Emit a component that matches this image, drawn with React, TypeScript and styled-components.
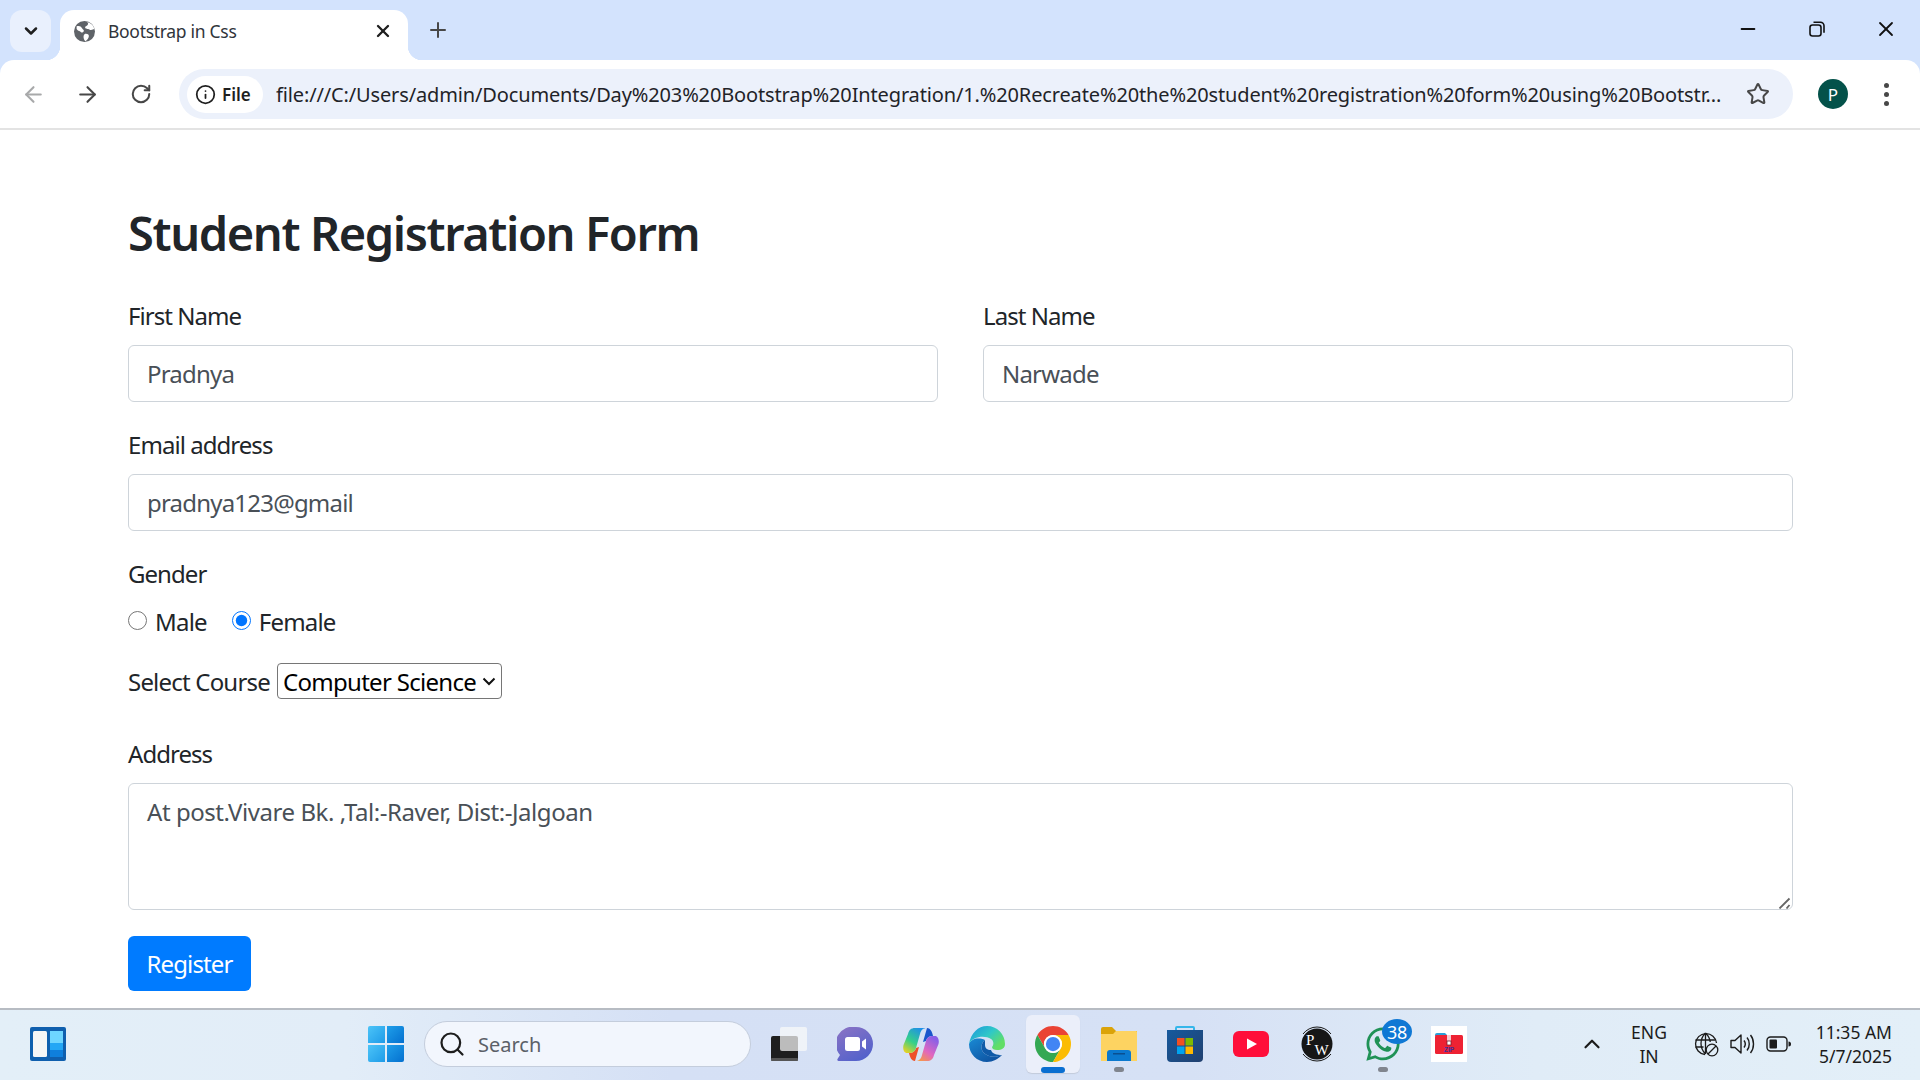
import React from "react";
import styled, { createGlobalStyle } from "styled-components";
import { ArrowLeft, ArrowRight, RotateCw, Star, Plus, X, ChevronDown, ChevronUp, Minus, Info, Search } from "lucide-react";
import { FaWhatsapp } from "react-icons/fa";

const URL_TEXT =
  "file:///C:/Users/admin/Documents/Day%203%20Bootstrap%20Integration/1.%20Recreate%20the%20student%20registration%20form%20using%20Bootstr...";

const FONT = `"Noto Sans", "Open Sans", "Liberation Sans", sans-serif`;

const SELECT_ARROW =
  "url(\"data:image/svg+xml,%3Csvg xmlns='http://www.w3.org/2000/svg' width='14' height='9' viewBox='0 0 14 9'%3E%3Cpath d='M1.500 1.500L7 7l5.500-5.500' fill='none' stroke='%23111' stroke-width='2'/%3E%3C/svg%3E\")";

const RESIZE_GRIP =
  "url(\"data:image/svg+xml,%3Csvg xmlns='http://www.w3.org/2000/svg' width='15' height='15' viewBox='0 0 15 15'%3E%3Cpath d='M2.500 14.500l10-10M9.500 14.500l3-3.500' fill='none' stroke='%23666' stroke-width='1.800'/%3E%3C/svg%3E\")";

const GlobalStyle = createGlobalStyle`
  html, body {
    margin: 0;
    padding: 0;
    height: 100%;
    overflow: hidden;
    background: #fff;
  }
  * { box-sizing: border-box; }
`;

const Shell = styled.div`
  display: flex;
  flex-direction: column;
  width: 1920px;
  height: 1080px;
  font-family: ${FONT};
  color: #212529;
`;

const TabStrip = styled.div`
  display: flex;
  align-items: flex-end;
  height: 60px;
  flex: none;
  padding-left: 10px;
  background: #d3e3fd;
`;

const TabListButton = styled.div`
  display: flex;
  align-items: center;
  justify-content: center;
  width: 41px;
  height: 42px;
  margin-bottom: 8px;
  border-radius: 12px;
  background: #e9f0fd;
  color: #1f1f1f;
`;

const Tab = styled.div`
  position: relative;
  display: flex;
  align-items: center;
  width: 348px;
  height: 50px;
  margin-left: 9px;
  padding: 0 15px 8px 14px;
  background: #fff;
  border-radius: 14px 14px 0 0;
  font-size: 17.5px;
  color: #30343a;
  &::before,
  &::after {
    content: "";
    position: absolute;
    bottom: 0;
    width: 14px;
    height: 14px;
  }
  &::before {
    left: -14px;
    background: radial-gradient(circle at 0 0, transparent 14px, #fff 14.5px);
  }
  &::after {
    right: -14px;
    background: radial-gradient(circle at 100% 0, transparent 14px, #fff 14.5px);
  }
`;

const TabTitle = styled.span`
  flex: 1;
  margin-left: 13px;
  letter-spacing: -0.3px;
`;

const NewTab = styled.div`
  display: flex;
  align-items: center;
  margin: 0 0 18px 18px;
  color: #474747;
`;

const WindowControls = styled.div`
  display: flex;
  align-items: center;
  margin-left: auto;
  align-self: flex-start;
  height: 58px;
  color: #111;
`;

const WindowButton = styled.div`
  display: flex;
  align-items: center;
  justify-content: center;
  width: 69px;
  height: 100%;
`;

const ToolbarBackdrop = styled.div`
  background: #d3e3fd;
  flex: none;
`;

const Toolbar = styled.div`
  display: flex;
  align-items: center;
  height: 70px;
  background: #fff;
  border-radius: 14px 14px 0 0;
  border-bottom: 2px solid #e3e3e3;
  padding-left: 11px;
`;

const NavButton = styled.div<{ $muted?: boolean }>`
  display: flex;
  align-items: center;
  justify-content: center;
  width: 44px;
  height: 44px;
  margin-right: 10px;
  color: ${({ $muted }) => ($muted ? "#a8a9aa" : "#474747")};
`;

const Omnibox = styled.div`
  display: flex;
  align-items: center;
  width: 1614px;
  height: 50px;
  margin-left: 6px;
  padding-left: 8px;
  border-radius: 25px;
  background: #ecf1fb;
`;

const FileChip = styled.div`
  display: flex;
  align-items: center;
  gap: 6px;
  width: 76px;
  height: 37px;
  padding-left: 8px;
  border-radius: 19px;
  background: #fff;
  font-size: 17px;
  font-weight: 600;
  color: #1f1f1f;
`;

const UrlText = styled.span`
  margin-left: 13px;
  font-size: 20px;
  letter-spacing: -0.14px;
  color: #1f2328;
  white-space: nowrap;
  width: 1449px;
  overflow: hidden;
`;

const StarSlot = styled.div`
  display: flex;
  margin-left: 21px;
  color: #474747;
`;

const Avatar = styled.div`
  display: flex;
  align-items: center;
  justify-content: center;
  width: 30px;
  height: 30px;
  margin-left: 25px;
  border-radius: 50%;
  background: #04524a;
  color: #fff;
  font-size: 17px;
`;

const KebabMenu = styled.div`
  display: flex;
  flex-direction: column;
  gap: 4px;
  margin-left: 36px;
  span {
    width: 5px;
    height: 5px;
    border-radius: 50%;
    background: #474747;
  }
`;

const Page = styled.main`
  flex: 1;
  min-height: 0;
  overflow: hidden;
  padding: 67px 127px 0 128px;
  background: #fff;
`;

const Heading = styled.h1`
  margin: 0 0 28px;
  font-size: 47px;
  font-weight: 600;
  line-height: 72px;
  letter-spacing: -1.4px;
  color: #212529;
`;

const Row = styled.div`
  display: flex;
  gap: 45px;
`;

const Group = styled.div<{ $gap?: number }>`
  flex: 1;
  margin-bottom: ${({ $gap }) => $gap ?? 24}px;
`;

const Label = styled.label`
  display: block;
  padding-top: 1px;
  margin-bottom: 11px;
  font-size: 24px;
  line-height: 36px;
  letter-spacing: -0.95px;
`;

const fieldCss = `
  display: block;
  width: 100%;
  padding: 0 18px;
  border: 1.5px solid #ced4da;
  border-radius: 6px;
  background: #fff;
  font-family: ${FONT};
  font-size: 24px;
  color: #495057;
  outline: none;
`;

const TextInput = styled.input`
  ${fieldCss}
  height: 57px;
  letter-spacing: -0.8px;
`;

const TextArea = styled.textarea`
  ${fieldCss}
  height: 127px;
  padding-top: 10px;
  line-height: 36px;
  letter-spacing: -0.45px;
  resize: vertical;
  &::-webkit-resizer {
    background: ${RESIZE_GRIP} no-repeat;
  }
`;

const RadioRow = styled.div`
  display: flex;
  align-items: center;
  height: 36px;
  margin-bottom: 24px;
`;

const RadioLabel = styled.label`
  display: flex;
  align-items: center;
  margin-right: 25px;
  font-size: 24px;
  letter-spacing: -0.8px;
`;

const Radio = styled.input`
  width: 19px;
  height: 19px;
  margin: 0 8px 2px 0;
  accent-color: #0075ff;
`;

const CourseRow = styled.div`
  display: flex;
  align-items: center;
  gap: 7px;
  height: 36px;
  margin-bottom: 36px;
  font-size: 24px;
  letter-spacing: -0.8px;
`;

const CourseSelect = styled.select`
  appearance: none;
  width: 225px;
  height: 36px;
  padding: 0 22px 0 5px;
  border: 1.5px solid #767676;
  border-radius: 4px;
  background: #fff ${SELECT_ARROW} no-repeat right 5px center;
  font-family: ${FONT};
  font-size: 24px;
  letter-spacing: -0.7px;
  color: #000;
`;

const RegisterButton = styled.button`
  display: block;
  width: 123px;
  height: 55px;
  margin-top: -2px;
  border: none;
  border-radius: 6px;
  background: #007bff;
  color: #fff;
  font-family: ${FONT};
  font-size: 24px;
  letter-spacing: -0.9px;
`;

const Taskbar = styled.footer`
  display: flex;
  align-items: center;
  height: 72px;
  flex: none;
  padding: 0 0 2px 30px;
  border-top: 2px solid #b7bcc3;
  background: linear-gradient(90deg, #e3eff8 0%, #e2edf8 18%, #d5e0f5 35%, #d6e1f5 62%, #e0ecf7 80%, #e3eff8 100%);
`;

const StartSlot = styled.div`
  display: flex;
  margin-left: 302px;
`;

const SearchBox = styled.div`
  display: flex;
  align-items: center;
  gap: 12px;
  width: 327px;
  height: 46px;
  margin-left: 20px;
  padding-left: 13px;
  border-radius: 23px;
  background: #f2f6fd;
  border: 1.5px solid #c4cddc;
  font-size: 20px;
  color: #5b6068;
  svg { color: #1d1d1d; }
`;

const AppList = styled.div`
  display: flex;
  margin-left: 5px;
`;

const AppSlot = styled.div<{ $active?: boolean }>`
  position: relative;
  display: flex;
  align-items: center;
  justify-content: center;
  width: 66px;
  height: 58px;
  &::before {
    content: "";
    display: ${({ $active }) => ($active ? "block" : "none")};
    position: absolute;
    inset: 0 6px 0 6px;
    border-radius: 6px;
    background: #ebeffa;
    box-shadow: 0 1px 1px #c3cbdb;
  }
  svg { position: relative; }
`;

const RunDot = styled.span<{ $active?: boolean }>`
  position: absolute;
  bottom: ${({ $active }) => ($active ? 0 : 1)}px;
  left: 50%;
  transform: translateX(-50%);
  width: ${({ $active }) => ($active ? 24 : 10)}px;
  height: ${({ $active }) => ($active ? 6 : 5)}px;
  border-radius: 3px;
  background: ${({ $active }) => ($active ? "#0a6fd1" : "#80858e")};
`;

const CountBadge = styled.span`
  position: absolute;
  top: 4px;
  right: 4px;
  display: flex;
  align-items: center;
  justify-content: center;
  width: 30px;
  height: 25px;
  border-radius: 50%;
  background: #0f78d4;
  color: #fff;
  font-size: 18px;
  letter-spacing: -0.4px;
`;

const Tray = styled.div`
  display: flex;
  align-items: center;
  flex: 1;
  color: #1b1b1b;
`;

const TrayChevron = styled.div`
  display: flex;
  margin-left: 97px;
`;

const LangBlock = styled.div`
  width: 60px;
  margin-left: 14px;
  text-align: center;
  font-size: 17.5px;
  line-height: 24px;
`;

const TrayIcons = styled.div`
  display: flex;
  align-items: center;
  gap: 11px;
  margin-left: 15px;
`;

const Clock = styled.div`
  margin-left: auto;
  padding-right: 28px;
  text-align: right;
  font-size: 17.5px;
  line-height: 24px;
`;

const GlobeFavicon = () => (
  <svg width="21" height="21" viewBox="0 0 24 24">
    <circle cx="12" cy="12" r="12" fill="#5f6368" />
    <path d="M3 6c3-1 5 0 6 2s3 2 2 4-3 1-4 0-3-1-4-3zM15 1c2 2 1 3 0 4s-3 1-2 3 4 1 5 2 2 0 5-1c0-4-4-7-8-8zM12 15c2-1 5 0 5 2s-2 5-4 6c-2-2-3-6-1-8z" fill="#fff" />
  </svg>
);

const RestoreIcon = () => (
  <svg width="16" height="16" viewBox="0 0 16 16" fill="none" stroke="#111" strokeWidth="1.6">
    <rect x="1" y="4" width="11" height="11" rx="2.5" />
    <path d="M4.5 1.2h7a3.5 3.5 0 0 1 3.5 3.5v7" />
  </svg>
);

const WidgetsIcon = () => (
  <svg width="36" height="34" viewBox="0 0 36 34">
    <rect width="36" height="34" rx="2" fill="#0f5fae" />
    <rect x="3" y="4" width="14" height="26" rx="1.5" fill="#f4f5f6" />
    <rect x="20" y="4" width="13" height="12" fill="#6ed6ff" />
    <rect x="20" y="16" width="13" height="7" fill="#23a7f5" />
    <rect x="20" y="23" width="13" height="7" fill="#0f7fdc" />
  </svg>
);

const StartIcon = () => (
  <svg width="36" height="36" viewBox="0 0 36 36">
    <defs>
      <linearGradient id="startA" x1="0" y1="0" x2="1" y2="1">
        <stop offset="0" stopColor="#4cc4f8" />
        <stop offset="1" stopColor="#1e9be8" />
      </linearGradient>
      <linearGradient id="startB" x1="0" y1="0" x2="1" y2="1">
        <stop offset="0" stopColor="#1f9fea" />
        <stop offset="1" stopColor="#0470cf" />
      </linearGradient>
    </defs>
    <path d="M2 0h15v17H0V2a2 2 0 0 1 2-2z" fill="url(#startA)" />
    <path d="M19 0h15a2 2 0 0 1 2 2v15H19z" fill="url(#startB)" />
    <path d="M0 19h17v17H2a2 2 0 0 1-2-2z" fill="url(#startA)" />
    <path d="M19 19h17v15a2 2 0 0 1-2 2H19z" fill="url(#startB)" />
  </svg>
);

const TaskViewIcon = () => (
  <svg width="36" height="34" viewBox="0 0 36 34">
    <rect x="0" y="9" width="27" height="25" rx="2" fill="#1e1e1e" />
    <rect x="0" y="31" width="27" height="3" rx="1" fill="#555" />
    <rect x="9" y="0" width="27" height="24" rx="2" fill="#fafafa" fillOpacity="0.72" />
  </svg>
);

const MeetIcon = () => (
  <svg width="36" height="34" viewBox="0 0 36 34">
    <defs>
      <linearGradient id="meetG" x1="0" y1="0" x2="0.6" y2="1">
        <stop offset="0" stopColor="#8d74c4" />
        <stop offset="1" stopColor="#5462cb" />
      </linearGradient>
    </defs>
    <path d="M19 0a17 17 0 0 1 0 34H1.500c-1 0-1.500-1-1-2l2.500-4A17 17 0 0 1 19 0z" fill="url(#meetG)" />
    <rect x="8" y="10" width="15" height="14" rx="2.500" fill="#fff" />
    <path d="M25 14.500l4-3v11l-4-3z" fill="#fff" />
  </svg>
);

const CopilotIcon = () => (
  <svg width="36" height="33" viewBox="0 0 36 33">
    <defs>
      <linearGradient id="copA" x1="0.7" y1="0" x2="0.1" y2="1">
        <stop offset="0" stopColor="#1f8fe8" />
        <stop offset="0.55" stopColor="#35d08a" />
        <stop offset="1" stopColor="#f2d21e" />
      </linearGradient>
      <linearGradient id="copB" x1="0.8" y1="0.1" x2="0.2" y2="1">
        <stop offset="0" stopColor="#8a5fe6" />
        <stop offset="0.55" stopColor="#e066c0" />
        <stop offset="1" stopColor="#f79a45" />
      </linearGradient>
    </defs>
    <path d="M24 0c3 0 5 3 6 8-3 0-6 1-7 5l-3 1z" fill="#1a56cc" />
    <path d="M12 33c-3 0-5-3-6-8 3 0 6-1 7-5l3-1z" fill="#ee4f2a" />
    <path d="M12 0h12c-4 0-6 2-7 6l-4 14c-1 4-4 5-7 5H4c-3 0-4.500-4-3.500-8L5 6c1-4 3-6 7-6z" fill="url(#copA)" />
    <path d="M24 33H12c4 0 6-2 7-6l4-14c1-4 4-5 7-5h2c3 0 4.500 4 3.500 8L31 27c-1 4-3 6-7 6z" fill="url(#copB)" />
  </svg>
);

const EdgeIcon = () => (
  <svg width="36" height="36" viewBox="0 0 36 36">
    <defs>
      <linearGradient id="edgeA" x1="0.1" y1="0.1" x2="0.9" y2="0.7">
        <stop offset="0" stopColor="#1f9fd8" />
        <stop offset="0.5" stopColor="#2fc8c8" />
        <stop offset="1" stopColor="#62de66" />
      </linearGradient>
      <linearGradient id="edgeB" x1="0" y1="0" x2="0.8" y2="1">
        <stop offset="0" stopColor="#1a8ad4" />
        <stop offset="1" stopColor="#0d4f9e" />
      </linearGradient>
    </defs>
    <path d="M0 18C0 28 8 36 18 36c6 0 11-3 15-7-7 3-14 2-18-2-4-4-3-10 1-13-7-3-14-1-16 4z" fill="url(#edgeB)" />
    <path d="M16 14c-4 3-5 9-1 13 4 4 11 5 18 2-5 0-10-1-11-5-4 0-6-2-6-5 0-2 0-4 0-5z" fill="#0f5aa8" />
    <path d="M0 18C2 7 9 0 18 0c10 0 18 8 18 18 0 4-3 6-8 6-3 0-5-1-5-3 2-2 2-6-1-8C16 9 4 10 0 18z" fill="url(#edgeA)" />
  </svg>
);

const ChromeIcon = () => (
  <svg width="36" height="36" viewBox="0 0 48 48">
    <path d="M44.780 12A24 24 0 0 0 3.220 12L13.600 30A12 12 0 0 1 24 12z" fill="#ea4335" />
    <path d="M3.220 12A24 24 0 0 0 24 48L34.400 30A12 12 0 0 1 13.600 30z" fill="#34a853" />
    <path d="M24 48A24 24 0 0 0 44.780 12H24A12 12 0 0 1 34.400 30z" fill="#fbbc04" />
    <circle cx="24" cy="24" r="12" fill="#fff" />
    <circle cx="24" cy="24" r="9.500" fill="#4285f4" />
  </svg>
);

const FolderIcon = () => (
  <svg width="36" height="34" viewBox="0 0 36 34">
    <path d="M0 2a2 2 0 0 1 2-2h9l4 4 21 0v5H0z" fill="#dba309" />
    <path d="M0 7l12 0 3-3h20a1 1 0 0 1 1 1v29H0z" fill="#fdd361" />
    <path d="M6 26a3 3 0 0 1 3-3h18a3 3 0 0 1 3 3v8H6z" fill="#0b79cf" />
    <rect x="12" y="26" width="12" height="1.500" fill="#0a4f90" />
  </svg>
);

const StoreIcon = () => (
  <svg width="36" height="36" viewBox="0 0 36 36">
    <defs>
      <linearGradient id="storeG" x1="0" y1="0" x2="1" y2="1">
        <stop offset="0" stopColor="#165a9e" />
        <stop offset="1" stopColor="#21406f" />
      </linearGradient>
    </defs>
    <path d="M9 6V2a1 1 0 0 1 1-1h16a1 1 0 0 1 1 1v4" fill="none" stroke="#35b6ea" strokeWidth="2" />
    <path d="M0 4h36v28a4 4 0 0 1-4 4H4a4 4 0 0 1-4-4z" fill="url(#storeG)" />
    <rect x="10" y="12" width="7.500" height="7.500" fill="#f25022" />
    <rect x="18.500" y="12" width="7.500" height="7.500" fill="#7fba00" />
    <rect x="10" y="20.500" width="7.500" height="7.500" fill="#00a4ef" />
    <rect x="18.500" y="20.500" width="7.500" height="7.500" fill="#ffb900" />
  </svg>
);

const YouTubeIcon = () => (
  <svg width="36" height="26" viewBox="0 0 36 26">
    <rect width="36" height="26" rx="6" fill="#ff0f3a" />
    <path d="M14 7.500l10 5.500-10 5.500z" fill="#fff" />
  </svg>
);

const PwIcon = () => (
  <svg width="36" height="36" viewBox="0 0 36 36">
    <circle cx="18" cy="18" r="15.500" fill="#161616" />
    <path d="M4 8A17.500 17.500 0 0 1 32 8M32 28A17.500 17.500 0 0 1 4 28" fill="none" stroke="#1a1a1a" strokeWidth="1" />
    <text x="7" y="19" fontFamily="Liberation Serif, serif" fontSize="15" fill="#fff">P</text>
    <text x="15.500" y="29" fontFamily="Liberation Serif, serif" fontSize="15" fill="#fff">W</text>
  </svg>
);

const ZipIcon = () => (
  <svg width="36" height="36" viewBox="0 0 36 36">
    <rect width="36" height="36" fill="#fff" />
    <path d="M4 9a2 2 0 0 1 2-2h8l3 3H4z" fill="#2a9fd8" />
    <rect x="4" y="9" width="28" height="19" rx="1.500" fill="#ee2233" />
    <rect x="16" y="9" width="4" height="6" fill="#f7c8d0" />
    <rect x="16" y="15" width="4" height="4" fill="#fff" stroke="#7a1a2a" strokeWidth="0.8" />
    <text x="18" y="26" fontFamily="Liberation Sans, sans-serif" fontSize="6.500" fontWeight="700" fill="#3b2f9e" textAnchor="middle">ZIP</text>
  </svg>
);

const GlobeBlockedIcon = () => (
  <svg width="25" height="25" viewBox="0 0 25 25" fill="none" stroke="#1b1b1b" strokeWidth="1.3">
    <path d="M11 22.500A10.500 10.500 0 1 1 22.500 11" />
    <path d="M11.500 1c-6 6-6 15 0 21M11.500 1c3 3 4.500 6 4.700 9M1.500 8h20M1.500 15h8M11.500 1v21" />
    <circle cx="18" cy="18" r="5.800" />
    <path d="M14 22l8-8" />
  </svg>
);

const SpeakerIcon = () => (
  <svg width="25" height="24" viewBox="0 0 25 24" fill="none" stroke="#1b1b1b" strokeWidth="1.4">
    <path d="M1 8.500h4L11 3v18l-6-5.500H1z" strokeLinejoin="round" />
    <path d="M14 8.500c1.500 2 1.500 5 0 7M17 5.500c3 3.500 3 9.500 0 13M20.500 3c4 5 4 13 0 18" />
  </svg>
);

const BatteryIcon = () => (
  <svg width="25" height="16" viewBox="0 0 25 16">
    <rect x="1" y="1" width="20" height="14" rx="3.500" fill="none" stroke="#1b1b1b" strokeWidth="1.400" />
    <rect x="3.500" y="3.500" width="7.500" height="9" rx="1" fill="#1b1b1b" />
    <path d="M22.500 5.500a2.500 2.500 0 0 1 0 5z" fill="#1b1b1b" />
  </svg>
);

function App() {
  return (
    <Shell>
      <GlobalStyle />
      <TabStrip>
        <TabListButton>
          <ChevronDown size={20} strokeWidth={3} />
        </TabListButton>
        <Tab>
          <GlobeFavicon />
          <TabTitle>Bootstrap in Css</TabTitle>
          <X size={20} strokeWidth={2.8} color="#1f1f1f" />
        </Tab>
        <NewTab>
          <Plus size={24} strokeWidth={2} />
        </NewTab>
        <WindowControls>
          <WindowButton>
            <Minus size={22} strokeWidth={2} />
          </WindowButton>
          <WindowButton>
            <RestoreIcon />
          </WindowButton>
          <WindowButton>
            <X size={24} strokeWidth={1.8} />
          </WindowButton>
        </WindowControls>
      </TabStrip>
      <ToolbarBackdrop>
        <Toolbar>
          <NavButton $muted>
            <ArrowLeft size={25} strokeWidth={2} />
          </NavButton>
          <NavButton>
            <ArrowRight size={25} strokeWidth={2} />
          </NavButton>
          <NavButton>
            <RotateCw size={22} strokeWidth={2.2} />
          </NavButton>
          <Omnibox>
            <FileChip>
              <Info size={21} strokeWidth={2} />
              File
            </FileChip>
            <UrlText>{URL_TEXT}</UrlText>
            <StarSlot>
              <Star size={24} strokeWidth={2} />
            </StarSlot>
          </Omnibox>
          <Avatar>P</Avatar>
          <KebabMenu>
            <span />
            <span />
            <span />
          </KebabMenu>
        </Toolbar>
      </ToolbarBackdrop>
      <Page>
        <Heading>Student Registration Form</Heading>
        <Row>
          <Group>
            <Label>First Name</Label>
            <TextInput readOnly value="Pradnya" />
          </Group>
          <Group>
            <Label>Last Name</Label>
            <TextInput readOnly value="Narwade" />
          </Group>
        </Row>
        <Group>
          <Label>Email address</Label>
          <TextInput readOnly value="pradnya123@gmail" />
        </Group>
        <Label>Gender</Label>
        <RadioRow>
          <RadioLabel>
            <Radio type="radio" name="gender" readOnly />
            Male
          </RadioLabel>
          <RadioLabel>
            <Radio type="radio" name="gender" readOnly checked />
            Female
          </RadioLabel>
        </RadioRow>
        <CourseRow>
          Select Course
          <CourseSelect defaultValue="cs">
            <option value="cs">Computer Science</option>
          </CourseSelect>
        </CourseRow>
        <Group $gap={28}>
          <Label>Address</Label>
          <TextArea readOnly value="At post.Vivare Bk. ,Tal:-Raver, Dist:-Jalgoan" />
        </Group>
        <RegisterButton>Register</RegisterButton>
      </Page>
      <Taskbar>
        <WidgetsIcon />
        <StartSlot>
          <StartIcon />
        </StartSlot>
        <SearchBox>
          <Search size={28} strokeWidth={1.9} />
          Search
        </SearchBox>
        <AppList>
          <AppSlot><TaskViewIcon /></AppSlot>
          <AppSlot><MeetIcon /></AppSlot>
          <AppSlot><CopilotIcon /></AppSlot>
          <AppSlot><EdgeIcon /></AppSlot>
          <AppSlot $active>
            <ChromeIcon />
            <RunDot $active />
          </AppSlot>
          <AppSlot>
            <FolderIcon />
            <RunDot />
          </AppSlot>
          <AppSlot><StoreIcon /></AppSlot>
          <AppSlot><YouTubeIcon /></AppSlot>
          <AppSlot><PwIcon /></AppSlot>
          <AppSlot>
            <FaWhatsapp size={38} color="#1f9256" />
            <CountBadge>38</CountBadge>
            <RunDot />
          </AppSlot>
          <AppSlot><ZipIcon /></AppSlot>
        </AppList>
        <Tray>
          <TrayChevron>
            <ChevronUp size={26} strokeWidth={2} />
          </TrayChevron>
          <LangBlock>ENG<br />IN</LangBlock>
          <TrayIcons>
            <GlobeBlockedIcon />
            <SpeakerIcon />
            <BatteryIcon />
          </TrayIcons>
          <Clock>11:35 AM<br />5/7/2025</Clock>
        </Tray>
      </Taskbar>
    </Shell>
  );
}

export default App;
